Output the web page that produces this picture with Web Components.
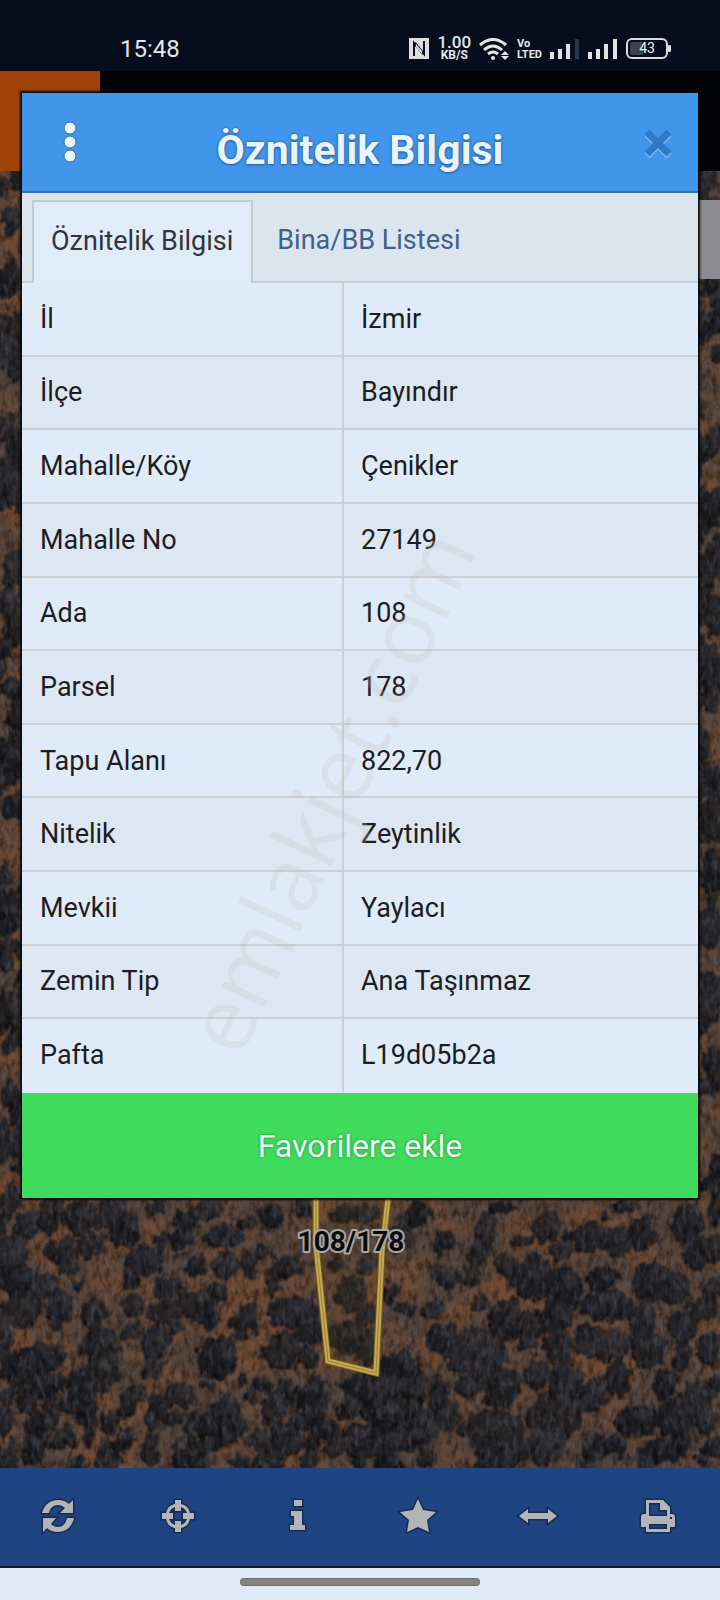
<!DOCTYPE html>
<html lang="tr">
<head>
<meta charset="utf-8">
<meta name="viewport" content="width=device-width, initial-scale=1">
<title>Öznitelik Bilgisi</title>
<style>
body{margin:0;background:#05070c;font-family:Roboto,"Noto Sans",sans-serif;color:#1b1c1e}
</style>
</head>
<body>
<parcel-app>
  <status-bar slot="status" time="15:48"></status-bar>
  <satellite-map slot="map" label="108/178"></satellite-map>
  <info-dialog slot="dialog">
    <span slot="title">Öznitelik Bilgisi</span>
    <tab-strip slot="tabs">
      <tab-item active>Öznitelik Bilgisi</tab-item>
      <tab-item>Bina/BB Listesi</tab-item>
    </tab-strip>
    <attribute-table></attribute-table>
    <favorite-button slot="action">Favorilere ekle</favorite-button>
    <water-mark slot="overlay">emlakjet.com</water-mark>
  </info-dialog>
  <tool-bar slot="tools"></tool-bar>
</parcel-app>

<script>
class Base extends HTMLElement {
  constructor() {
    super();
    this.attachShadow({ mode: "open" });
  }
  connectedCallback() {
    this.shadowRoot.innerHTML = this.render();
  }
}

customElements.define("parcel-app", class extends Base {
  render() {
    return `<style>
      :host{display:grid;min-height:100vh;grid-template:71px 100px minmax(0,1fr) 98px 34px / minmax(0,1fr)}
      .top{grid-area:2/1;background:#020306}
      .mark{width:100px;height:100%;background:#a04207}
      slot[name=map]::slotted(*){grid-area:3/1}
      slot[name=dialog]::slotted(*){grid-area:2/1/4/2;margin:22px;margin-bottom:48px;align-self:start}
      .home{display:flex;align-items:center;justify-content:center;padding-bottom:4px;background:#e0ebf7;border-top:2px solid #101c30;box-sizing:border-box}
      .pill{width:33%;height:6px;border-radius:4px;background:#86847d;box-shadow:0 0 0 1px #6d6d6a}
    </style>
    <slot name="status"></slot>
    <div class="top"><div class="mark"></div></div>
    <slot name="map"></slot>
    <slot name="tools"></slot>
    <div class="home"><div class="pill"></div></div>
    <slot name="dialog"></slot>`;
  }
});

customElements.define("status-bar", class extends Base {
  render() {
    return `<style>
      :host{display:flex;align-items:center;justify-content:space-between;padding:26px 49px 0 120px;background:#060e1d;color:#e4e6ea;box-sizing:border-box}
      time{font-size:24px;line-height:28px}
      .icons{display:flex;align-items:center;gap:8px}
      svg{display:block}
      .speed,.volte{display:flex;flex-direction:column;align-items:center;font-weight:700;font-size:12px;line-height:12px}
      .speed b{font-size:17px;line-height:13px;font-weight:500}
      .volte{align-items:flex-start;font-size:11px;line-height:11px}
    </style>
    <time>${this.getAttribute("time")}</time>
    <div class="icons">
      <svg width="20" height="21" viewBox="0 0 20 21"><path d="M0 0H20V21H0Z" fill="#dedede"/><path d="M5 18V5L14 16M15 3V16L6 5" fill="none" stroke="#0a1120" stroke-width="2"/><path d="M7 6L13 13V16L7 9Z" fill="#dedede"/></svg>
      <div class="speed"><b>1.00</b><span>KB/S</span></div>
      <svg width="30" height="22" viewBox="0 0 30 22" fill="none" stroke="#e6e6e6" stroke-width="3"><path d="M1 7Q14-4 27 7M5 12Q14 4 23 12M9 16Q14 12 19 16"/><circle cx="14" cy="20" r="2" fill="#e6e6e6" stroke="none"/><path d="M26 13L30 17H22ZM22 18H30L26 22Z" fill="#e6e6e6" stroke="none"/></svg>
      <div class="volte"><span>Vo</span><span>LTED</span></div>
      <svg width="30" height="20" viewBox="0 0 30 20" fill="#e2e2e2"><path d="M0 13h4v7H0zM8 10h4v10H8zM16 5h4v15h-4z"/><path d="M25 0h4v20h-4z" fill="#26384f"/></svg>
      <svg width="30" height="20" viewBox="0 0 30 20" fill="#e2e2e2"><path d="M0 13h4v7H0zM8 10h4v10H8zM16 5h4v15h-4zM25 0h4v20h-4z"/></svg>
      <svg width="45" height="21" viewBox="0 0 45 21"><rect x="1" y="1" width="40" height="19" rx="5" fill="none" stroke="#dcdcdc" stroke-width="2"/><rect x="4" y="4" width="13" height="13" rx="2" fill="#3a4350"/><rect x="42" y="7" width="3" height="7" rx="1" fill="#dcdcdc"/><text x="21" y="15" font-family="Roboto,sans-serif" font-size="14" fill="#f2f2f2" text-anchor="middle">43</text></svg>
    </div>`;
  }
});

/* Tree crowns of the two lower halves of the map: centre x, centre y, radius x, radius y (three units per pixel). */
const CROWNS_LEFT = [[40,50,30,40],[85,135,35,40],[155,100,38,55],[245,110,50,50],[345,80,40,55],[380,150,45,50],[190,205,55,35],[280,195,45,36],[35,220,45,60],[50,300,65,42],[215,258,30,28],[140,320,48,32],[180,385,35,55],[70,385,65,45],[285,395,38,42],[310,125,16,24],[470,75,30,22],[560,125,36,36],[620,85,45,32],[545,175,36,30],[488,180,16,26],[440,240,60,42],[400,295,26,28],[590,255,30,26],[675,165,55,36],[680,255,38,32],[745,125,22,18],[820,110,38,38],[910,80,30,35],[790,212,18,24],[750,250,28,42],[860,260,48,36],[510,318,46,32],[400,375,32,32],[650,340,34,30],[590,365,52,42],[630,415,32,32],[500,395,55,36],[820,322,26,26],[240,312,18,10],[395,455,28,26],[470,490,40,55],[300,490,52,52],[310,570,55,60],[130,530,70,42],[60,560,60,46],[655,530,60,60],[740,420,42,48],[880,395,80,44],[930,450,44,38],[850,510,56,54],[930,530,36,32],[460,565,26,24],[525,450,14,24],[150,615,48,38],[90,665,36,34],[235,600,30,36],[1040,100,40,30],[1060,340,48,50],[1050,470,50,45],[1000,460,24,40],[1010,250,20,25],[10,470,35,70],[10,100,20,60],[710,462,12,14],[735,592,12,14]];
const CROWNS_RIGHT = [[20,100,40,26],[25,250,32,28],[130,160,36,46],[180,100,32,36],[250,185,34,32],[230,268,20,22],[270,295,32,26],[355,218,32,32],[385,150,30,46],[335,285,22,30],[430,80,40,22],[475,180,13,13],[512,183,14,14],[565,135,40,46],[605,208,34,32],[630,165,20,16],[695,170,46,50],[775,180,42,46],[850,160,38,60],[740,105,12,12],[790,75,34,14],[985,130,42,60],[1020,220,50,46],[1060,200,40,40],[440,250,26,36],[520,290,65,62],[610,325,62,60],[730,295,46,36],[880,300,60,55],[950,325,44,48],[740,375,76,44],[850,420,40,60],[95,335,24,28],[135,385,38,22],[225,385,30,28],[355,368,28,22],[445,420,48,64],[520,430,50,44],[590,410,50,50],[250,475,50,42],[345,515,92,70],[600,500,42,55],[510,485,34,24],[670,460,26,22],[740,490,90,44],[870,510,50,50],[970,440,46,48],[1030,385,40,32],[1060,330,30,32],[1050,505,36,44],[970,530,26,42],[120,565,66,56],[50,640,90,70],[240,615,30,22],[330,618,38,30],[535,580,40,44],[430,620,56,60],[620,600,46,52],[780,590,40,52],[700,640,46,46],[920,610,32,42],[1020,640,54,38],[250,705,50,46],[590,700,86,66],[400,745,100,55],[840,720,76,44],[950,710,60,60],[1040,720,34,42],[560,790,66,50],[710,800,40,40],[910,810,66,34],[1070,800,24,30],[440,810,90,40],[130,740,110,70],[25,500,34,60],[25,400,30,30],[1070,600,18,20],[1070,80,24,50]];

customElements.define("satellite-map", class extends Base {
  crowns() {
    let seed = 7;
    const rnd = () => (seed = (seed * 16807) % 2147483647) / 2147483647;
    const tones = ["#222124", "#272425", "#1d1e23", "#2c2a2d", "#25252b"];
    let crowns = "";
    const put = (x, y, rx, ry) => {
      const tone = tones[Math.floor(rnd() * tones.length)];
      crowns += `<ellipse cx="${x - 2}" cy="${y + 2}" rx="${rx}" ry="${ry}" fill="#151316"/><ellipse cx="${x}" cy="${y}" rx="${rx}" ry="${ry}" fill="${tone}"/>`;
      crowns += `<ellipse cx="${x + rx / 3}" cy="${y - ry / 3}" rx="${rx / 2}" ry="${ry / 2}" fill="#3c393e" opacity=".5"/>`;
    };
    for (const [x, y, rx, ry] of CROWNS_LEFT) put(x / 3, 1009 + y / 3, rx / 3, ry / 3);
    for (const [x, y, rx, ry] of CROWNS_RIGHT) put(360 + x / 3, 1009 + y / 3, rx / 3, ry / 3);
    for (let i = 0; i < 140; i++) put(rnd() * 440, 1206 + rnd() * 32 + rnd() * 60, 4 + rnd() * 8, 5 + rnd() * 9);
    for (let i = 0; i < 30; i++) put(rnd() * 720, 1265 + rnd() * 35, 4 + rnd() * 6, 5 + rnd() * 6);
    for (let i = 0; i < 130; i++) {
      const side = i % 2 ? 694 : -4;
      put(side + rnd() * 30, rnd() * 1010, 6 + rnd() * 9, 7 + rnd() * 14);
    }
    return crowns;
  }
  render() {
    return `<style>
      :host{display:block;position:relative;overflow:hidden;background:#493a33}
      svg{position:absolute;inset:0;width:100%;height:100%;display:block}
      text{font:700 28px Roboto,sans-serif;fill:#0b0b0b;stroke:#a9a6a4;stroke-width:4px;stroke-linejoin:round;paint-order:stroke}
      .panel{position:absolute;right:0;top:29px;width:24px;height:79px;background:#8c8b91}
    </style>
    <svg viewBox="0 0 720 1297" preserveAspectRatio="xMidYMax slice" role="img" aria-label="Uydu haritası">
      <defs>
        <filter id="rough" x="0" y="0" width="100%" height="100%" color-interpolation-filters="sRGB"><feTurbulence type="fractalNoise" baseFrequency=".11 .08" numOctaves="3" seed="4"/><feDisplacementMap in="SourceGraphic" scale="17" xChannelSelector="R" yChannelSelector="G"/><feGaussianBlur stdDeviation="1"/></filter>
        <filter id="grain" x="0" y="0" width="100%" height="100%"><feTurbulence type="fractalNoise" baseFrequency=".17 .1" numOctaves="3" seed="9"/><feColorMatrix values="0 0 0 0 0  0 0 0 0 0  0 0 0 0 0  2.4 0 0 0 -1"/></filter>
        <filter id="light" x="0" y="0" width="100%" height="100%" color-interpolation-filters="sRGB"><feTurbulence type="fractalNoise" baseFrequency=".22 .09" numOctaves="2" seed="21"/><feColorMatrix values="0 0 0 0 .42  0 0 0 0 .42  0 0 0 0 .48  0 3 0 0 -1.5"/></filter>
        <filter id="soil" x="0" y="0" width="100%" height="100%" color-interpolation-filters="sRGB"><feTurbulence type="fractalNoise" baseFrequency=".014 .02" numOctaves="3" seed="3"/><feColorMatrix values="0 0 0 0 .46  0 0 0 0 .3  0 0 0 0 .2  4 0 0 0 -1.6"/></filter>
      </defs>
      <rect width="720" height="1297" fill="#53433a"/>
      <rect width="720" height="1297" filter="url(#soil)" opacity=".8"/>
      <g filter="url(#rough)"><rect width="720" height="1297" fill="none"/>${this.crowns()}</g>
      <rect width="720" height="1297" filter="url(#grain)" opacity=".45"/>
      <rect width="720" height="1297" filter="url(#light)" opacity=".3"/>
      <path d="M316 1020V1075L328 1190L376 1202L382 1080L389 1020" fill="#6b5420" fill-opacity=".12" stroke="#6e5a25" stroke-width="7"/>
      <path d="M316 1020V1075L328 1190L376 1202L382 1080L389 1020" fill="none" stroke="#c9a94e" stroke-width="5"/>
      <path d="M316 1020V1075L328 1190L376 1202L382 1080L389 1020" fill="none" stroke="#96803d" stroke-width="1"/>
      <text x="351" y="1080" text-anchor="middle">${this.getAttribute("label")}</text>
    </svg>
    <div class="panel"></div>`;
  }
});

customElements.define("info-dialog", class extends Base {
  render() {
    return `<style>
      :host{display:block;position:relative;box-shadow:0 0 2px 2px #07090b}
      header{display:grid;grid-template-columns:96px minmax(0,1fr) 80px;align-items:center;height:100px;box-sizing:border-box;background:#4196ec;border-bottom:2px solid #316fb5}
      h1{margin:0;padding:16px 16px 0 0;text-align:center;font-size:41px;line-height:48px;font-weight:700;color:#e9f4ff;text-shadow:0 0 2px #1c4f87,0 1px 3px #2765a6}
      button{border:0;padding:0;background:none;justify-self:center}
      .close{padding-top:4px}
      svg{display:block}
      .body{background:#dfebf8}
    </style>
    <header>
      <button aria-label="Menü"><svg width="20" height="48" viewBox="0 0 20 48" fill="#ecf6ff" stroke="#2d6fb5" stroke-width="1"><circle cx="10" cy="10" r="6"/><circle cx="10" cy="24" r="6"/><circle cx="10" cy="38" r="6"/></svg></button>
      <h1><slot name="title"></slot></h1>
      <button class="close" aria-label="Kapat"><svg width="32" height="32" viewBox="0 0 32 32" fill="none" stroke-width="7"><path d="M5 6L27 28M27 6L5 28" stroke="#78b8f8"/><path d="M5 4L27 26M27 4L5 26" stroke="#3079c6"/></svg></button>
    </header>
    <div class="body"><slot name="tabs"></slot><slot></slot></div>
    <slot name="action"></slot>
    <slot name="overlay"></slot>`;
  }
});

customElements.define("tab-strip", class extends Base {
  render() {
    return `<style>
      :host{display:flex;align-items:flex-end;height:90px;padding:0 10px;box-sizing:border-box;background:#dae5ed;box-shadow:inset 0 -2px #c6ced5}
    </style><slot></slot>`;
  }
  connectedCallback() {
    super.connectedCallback();
    this.setAttribute("role", "tablist");
  }
});

customElements.define("tab-item", class extends Base {
  render() {
    return `<style>
      :host{display:block}
      button{display:block;height:83px;box-sizing:border-box;margin:0;padding:0 18px 4px 24px;border:0 solid #c3cad0;background:none;font:400 27px/32px Roboto,sans-serif;color:#41608c}
      :host([active]) button{padding:0 18px 4px 17px;background:#e0ecf9;border-width:2px 2px 0;color:#33343a}
    </style><button role="tab" aria-selected="${this.hasAttribute("active")}"><slot></slot></button>`;
  }
});

const ATTRIBUTES = [
  ["İl", "İzmir"], ["İlçe", "Bayındır"], ["Mahalle/Köy", "Çenikler"], ["Mahalle No", "27149"],
  ["Ada", "108"], ["Parsel", "178"], ["Tapu Alanı", "822,70"], ["Nitelik", "Zeytinlik"],
  ["Mevkii", "Yaylacı"], ["Zemin Tip", "Ana Taşınmaz"], ["Pafta", "L19d05b2a"]
];

customElements.define("attribute-table", class extends Base {
  render() {
    return `<style>
      :host{display:block}
      table{width:100%;height:810px;border-collapse:separate;border-spacing:0;table-layout:fixed}
      th,td{padding:0 17px;text-align:left;vertical-align:middle;font-size:27px;line-height:32px;font-weight:400;color:#1c1d1e;border-bottom:2px solid #cccfd4}
      th{width:322px;box-sizing:border-box;padding-left:18px;border-right:2px solid #cccfd4}
      tr:nth-child(even){background:#dce7f3}
      tr:last-child>*{border-bottom-color:transparent}
    </style>
    <table><tbody>${ATTRIBUTES.map(([k, v]) => `<tr><th scope="row">${k}</th><td>${v}</td></tr>`).join("")}</tbody></table>`;
  }
});

customElements.define("favorite-button", class extends Base {
  render() {
    return `<style>
      :host{display:block}
      button{display:block;width:100%;height:105px;border:0;margin:0;padding:0;background:#3fdb5c;color:#ecfbf4;font:400 32px/36px Roboto,sans-serif;text-shadow:0 0 3px #23883a}
    </style><button><slot></slot></button>`;
  }
});

customElements.define("water-mark", class extends Base {
  render() {
    return `<style>
      :host{position:absolute;inset:0;display:grid;place-items:center;pointer-events:none;overflow:hidden;padding:288px 64px 0 0}
      span{font:400 90px/96px "Open Sans","Noto Sans",sans-serif;white-space:nowrap;color:#c0bcb8;opacity:.22;transform:rotate(-65deg)}
    </style><span><slot></slot></span>`;
  }
});

const ICONS = {
  "Yenile": `<path d="M1 14C3 6 9 1 17 1C22 1 26 3 28 5L32 1V14H19L24 9C22 7 20 6 17 6C12 6 9 9 8 14Z"/><path d="M33 19C31 28 25 33 17 33C12 33 8 31 6 29L2 33V19H15L10 25C12 27 14 28 17 28C22 28 25 24 26 19Z"/>`,
  "Konum": `<path fill-rule="evenodd" d="M14 1H20V5C25 6 28 9 29 14H33V20H29C28 25 25 28 20 29V33H14V29C9 28 6 25 5 20H1V14H5C6 9 9 6 14 5ZM14 8C11 9 9 11 8 14H12V20H8C9 23 11 25 14 26V22H20V26C23 25 25 23 26 20H22V14H26C25 11 23 9 20 8V12H14Z"/>`,
  "Bilgi": `<path d="M13 1H21V7H13ZM10 12H21V26H24V31H9V26H13V17H10Z"/>`,
  "Favoriler": `<path d="M17 0L22 11L35 13L26 21L28 33L17 28L6 33L8 21L-1 13L12 11Z"/>`,
  "Ölçüm": `<path d="M-2 17L7 10V14H27V10L36 17L27 24V20H7V24Z"/>`,
  "Yazdır": `<path fill-rule="evenodd" d="M5 1H22L29 8V15H31Q34 15 34 18V28H29V33H5V28H0V18Q0 15 3 15H5ZM8 4V17H26V11H19V4ZM8 25V30H26V25ZM29 18V20H31V18Z"/>`
};

customElements.define("tool-bar", class extends Base {
  render() {
    return `<style>
      :host{display:grid;grid-template-columns:repeat(6,minmax(0,1fr));background:#1f4482}
      button{display:flex;align-items:center;justify-content:center;border:0;padding:0 4px 2px 0;background:none}
      svg{display:block;overflow:visible;fill:#b3b4b8;stroke:#152c51;stroke-width:3;paint-order:stroke}
    </style>
    ${Object.entries(ICONS).map(([name, icon]) => `<button aria-label="${name}"><svg width="34" height="34" viewBox="0 0 34 34">${icon}</svg></button>`).join("")}`;
  }
});
</script>
</body>
</html>
